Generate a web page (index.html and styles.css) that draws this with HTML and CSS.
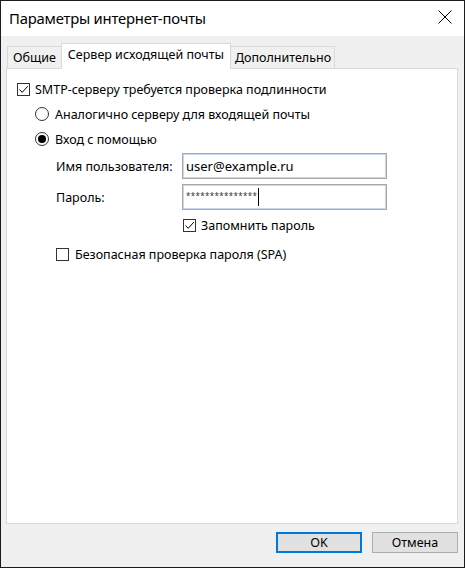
FILE: index.html
```html
<!DOCTYPE html>
<html lang="ru">
<head>
<meta charset="utf-8">
<link rel="stylesheet" href="styles.css">
</head>
<body>
<div class="window">
  <div class="titlebar">
    <span class="title">Параметры интернет-почты</span>
    <svg class="close" width="14" height="14" viewBox="0 0 14 14"><path d="M0.5 0.5 L13.5 13.5 M13.5 0.5 L0.5 13.5" stroke="#000" stroke-width="1" fill="none"/></svg>
  </div>
  <div class="body">
    <div class="tabs">
      <div class="tab first">Общие</div>
      <div class="tab active">Сервер исходящей почты</div>
      <div class="tab last">Дополнительно</div>
    </div>
    <div class="panel">
      <div class="row r-smtp">
        <span class="cb checked"><svg width="11" height="11" viewBox="0 0 11 11"><path d="M1.5 5.5 L4.2 8.3 L9.8 2.2" stroke="#000" stroke-width="1" fill="none"/></svg></span>
        <span class="lbl">SMTP-серверу требуется проверка подлинности</span>
      </div>
      <div class="row r-radio">
        <span class="rb"></span>
        <span class="lbl">Аналогично серверу для входящей почты</span>
      </div>
      <div class="row r-radio r-radio2">
        <span class="rb on"><span class="dot"></span></span>
        <span class="lbl">Вход с помощью</span>
      </div>
      <div class="field f-user">
        <span class="flabel">Имя пользователя:</span>
        <div class="input"><span class="val">user@example.ru</span></div>
      </div>
      <div class="field f-pass">
        <span class="flabel">Пароль:</span>
        <div class="input"><span class="pw">***************</span><span class="caret"></span></div>
      </div>
      <div class="row r-remember">
        <span class="cb checked"><svg width="11" height="11" viewBox="0 0 11 11"><path d="M1.5 5.5 L4.2 8.3 L9.8 2.2" stroke="#000" stroke-width="1" fill="none"/></svg></span>
        <span class="lbl">Запомнить пароль</span>
      </div>
      <div class="row r-spa">
        <span class="cb"></span>
        <span class="lbl">Безопасная проверка пароля (SPA)</span>
      </div>
    </div>
    <div class="buttons">
      <div class="btn default">OK</div>
      <div class="btn">Отмена</div>
    </div>
  </div>
</div>
</body>
</html>
```

FILE: styles.css
```css
* { box-sizing: border-box; }
html, body { margin: 0; padding: 0; }
body {
  width: 465px;
  height: 568px;
  font-family: "Noto Sans", "Open Sans", "DejaVu Sans", sans-serif;
  font-size: 12.5px;
  color: #000;
  background: #fff;
}
.window {
  width: 465px;
  height: 568px;
  border: 1px solid #1c1c1c;
  display: flex;
  flex-direction: column;
  background: #f0f0f0;
}
.titlebar {
  height: 35px;
  background: #fff;
  display: flex;
  align-items: center;
  justify-content: space-between;
  padding: 0 12px 2px 8px;
}
.title {
  font-size: 14.8px;
  letter-spacing: -0.2px;
}
.close { display: block; margin-top: -2px; }
.body {
  flex: 1;
  display: flex;
  flex-direction: column;
  padding: 8px 6px 0 5px;
}
.tabs {
  display: flex;
  align-items: flex-end;
  height: 25px;
  margin-bottom: -1px;
  position: relative;
  z-index: 1;
  padding-left: 1px;
}
.tab {
  height: 22px;
  border: 1px solid #d9d9d9;
  border-bottom: none;
  background: #f0f0f0;
  padding: 0 5px;
  display: flex;
  align-items: center;
  white-space: nowrap;
  margin-bottom: 1px;
}
.tab.first { border-right: none; }
.tab.last { padding: 0 3px 0 4px; }
.tab.active {
  height: 26px;
  background: #fff;
  margin-bottom: 0;
  padding: 0 6px 4px 6px;
}
.tab.active + .tab { border-left: none; }
.panel {
  height: 456px;
  background: #fff;
  border: 1px solid #d9d9d9;
  padding-top: 10px;
  display: flex;
  flex-direction: column;
}
.row {
  height: 20px;
  display: flex;
  align-items: center;
}
.r-smtp { padding-left: 10px; }
.r-radio { padding-left: 28px; margin-top: 5px; }
.cb {
  width: 13px;
  height: 13px;
  border: 1px solid #333;
  background: #fff;
  display: flex;
  align-items: center;
  justify-content: center;
  flex: none;
}
.cb svg { display: block; }
.r-smtp .lbl { margin-left: 5px; }
.rb {
  width: 14px;
  height: 14px;
  border: 1px solid #333;
  border-radius: 50%;
  background: #fff;
  display: flex;
  align-items: center;
  justify-content: center;
  flex: none;
}
.rb .dot {
  width: 8px;
  height: 8px;
  border-radius: 50%;
  background: #000;
}
.r-radio .lbl { margin-left: 6px; }
.field {
  display: flex;
  align-items: center;
  padding-left: 49px;
  height: 26px;
}
.f-user { margin-top: 4px; }
.f-pass { margin-top: 5px; }
.flabel { width: 126px; flex: none; }
.input {
  width: 205px;
  height: 26px;
  border: 1px solid #a8a8a8;
  box-shadow: inset 0 0 0 1px #c7d7ec;
  background: #fff;
  display: flex;
  align-items: center;
  padding-left: 3px;
}
.val { font-size: 13px; }
.pw {
  font-size: 8px;
  letter-spacing: 0.35px;
  color: #333;
  margin-top: -3px;
}
.caret {
  width: 1px;
  height: 18px;
  background: #000;
  margin-left: 1px;
}
.r-remember { padding-left: 176px; margin-top: 5px; }
.r-remember .lbl { margin-left: 5px; }
.r-spa { padding-left: 49px; margin-top: 9px; }
.r-spa .lbl { margin-left: 6px; }
.buttons {
  display: flex;
  justify-content: flex-end;
  gap: 10px;
  padding-top: 8px;
}
.btn {
  width: 86px;
  height: 21px;
  border: 1px solid #adadad;
  background: #e1e1e1;
  display: flex;
  align-items: center;
  justify-content: center;
}
.btn.default {
  border: 2px solid #0078d7;
}
```
